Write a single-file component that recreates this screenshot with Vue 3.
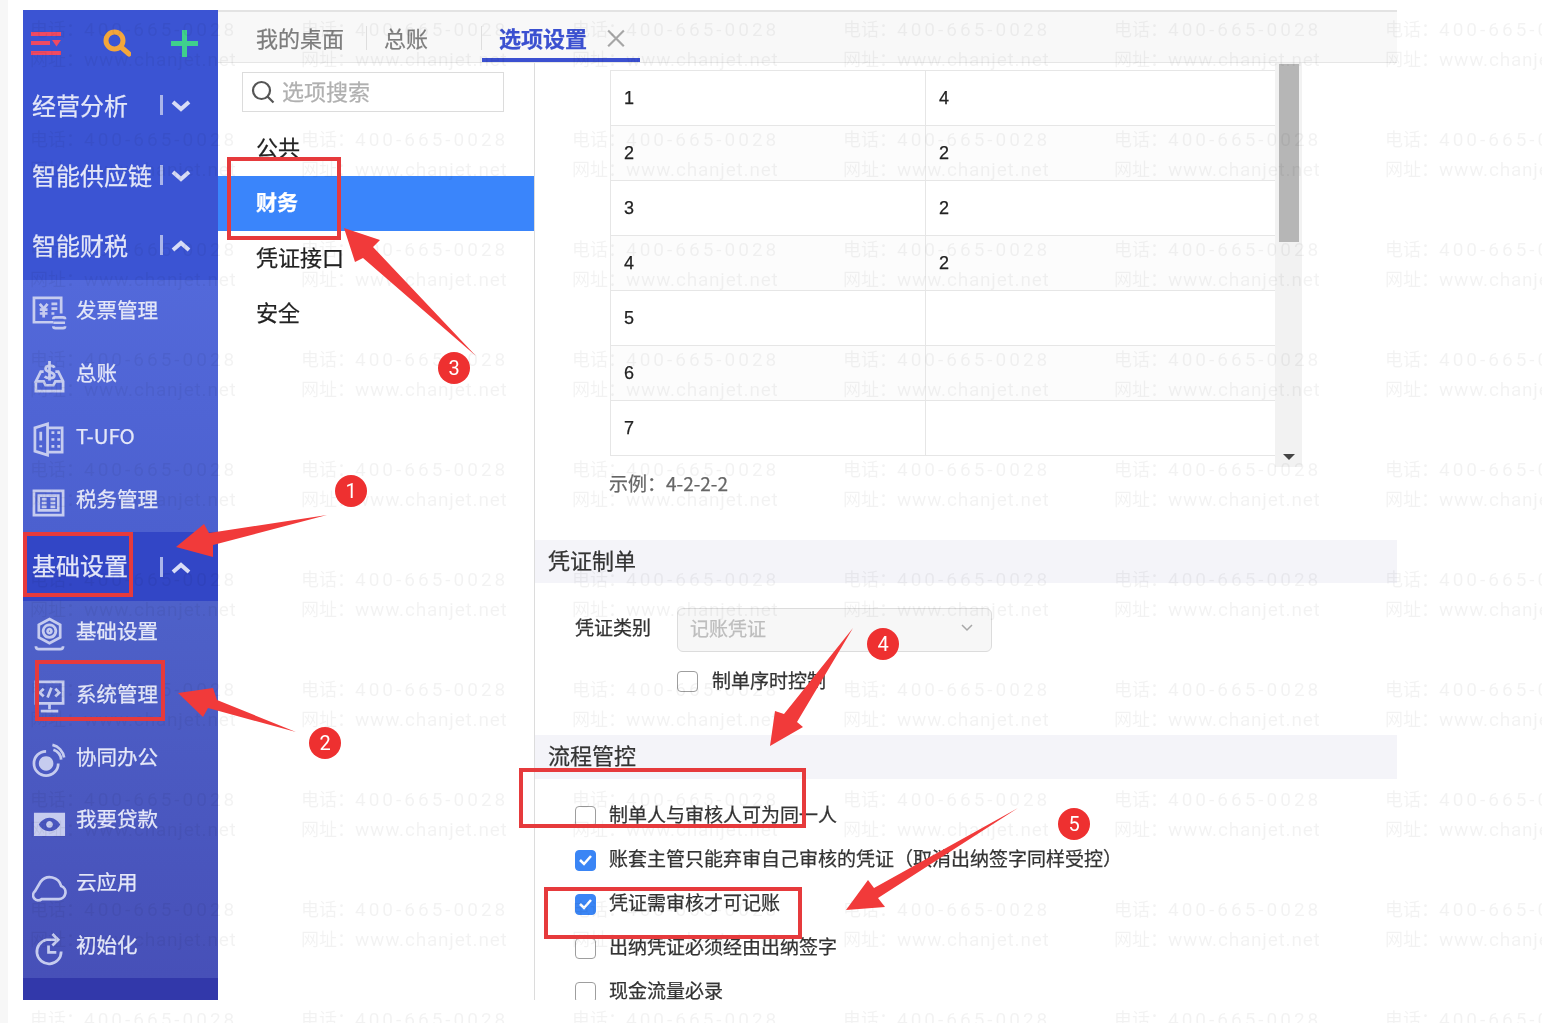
<script setup>
const icons = {
  invoice: ['M22 27H2V2h28v16', 'M8 8l4 5 4-5M12 13v9M8 14h8M8 18h8', 'M20 8h6M20 13h6M20 18h3', 'M22 24a2 2 0 0 1 2-2h8a2 2 0 0 1 2 2M22 31a2 2 0 0 0 2 2h8a2 2 0 0 0 2-2M22 27.5h12'],
  ledger: ['M4 23v10h28V23L27 13h-3M12 13H9L4 23h8l2 4h8l2-4h8', 'M23 9c-1-3-9-3-9 1s9 3 9 7-8 3-10 1M18 2v20'],
  ufo: ['M3 6l13-4v32L3 30z', 'M16 6h15v25H16', 'M9 10v9M9 24v2', 'M20 11h3M26 11h3M20 18h3M26 18h3M20 25h3M26 25h3'],
  tax: ['M2 6h30v25H2z', 'M7 11h20v15H7z', 'M19 14.500h5M19 18.500h5M19 22.500h5', 'M10 14.500h5M10 18.500h5M10 22.500h5'],
  base: ['M18 2l11 6v13l-11 6-11-6V8z', 'M18 8a6.500 6.500 0 1 0 .01 0', 'M18 12.500a2 2 0 1 0 .01 0', 'M4 30q0 3 3 3h22q3 0 3-3'],
  system: ['M4 2h28v22H4z', 'M12 9l-4 4 4 4M24 9l4 4-4 4M20 8l-4 10', 'M18 24v6M9 32h18'],
  collab: ['M27 21a12.500 12.500 0 1 1-12.500-12.500', 'M22 7a12 12 0 0 1 8 10', 'M21 2a16 16 0 0 1 12 13'],
  cloud: ['M10 32h17a7 7 0 0 0 3-13.500A12 12 0 0 0 9 14L3 24a5 5 0 0 0 7 8z'],
  init: ['M30 21a12.500 12.500 0 1 1-15-12h10', 'M21 3l6 6-6 6', 'M17 15v7h8']
};
const solid = {
  collab: 'M14.500 13.500a7.500 7.500 0 1 0 .01 0',
  loan: 'M2 8h32v24H2zM18 13c-6 0-10 5-11 7 1 2 5 7 11 7s10-5 11-7c-1-2-5-7-11-7zM18 16.500a3.500 3.500 0 1 1-.01 0z'
};
const financeItems = [
  { name: '发票管理', icon: 'invoice' },
  { name: '总账', icon: 'ledger' },
  { name: 'T-UFO', icon: 'ufo' },
  { name: '税务管理', icon: 'tax' }
];
const baseItems = [
  { name: '基础设置', icon: 'base' },
  { name: '系统管理', icon: 'system' },
  { name: '协同办公', icon: 'collab' },
  { name: '我要贷款', icon: 'loan' },
  { name: '云应用', icon: 'cloud' },
  { name: '初始化', icon: 'init' }
];
const tableRows = [['1', '4'], ['2', '2'], ['3', '2'], ['4', '2'], ['5', ''], ['6', ''], ['7', '']];
const checks = [
  { text: '制单人与审核人可为同一人', on: false },
  { text: '账套主管只能弃审自己审核的凭证（取消出纳签字同样受控）', on: true },
  { text: '凭证需审核才可记账', on: true },
  { text: '出纳凭证必须经由出纳签字', on: false },
  { text: '现金流量必录', on: false }
];
const marks = Array.from({ length: 60 }, (_, i) => i);
const frames = [
  [229, 159, 110, 79],
  [25, 534, 106, 61],
  [37, 662, 126, 57],
  [521, 770, 283, 56],
  [546, 889, 254, 48]
];
const arrows = [
  '176,547 204,524 209,533 327,515 213,545 213,557',
  '178,693 213,688 217,700 296,732 208,708 203,717',
  '344,228 380,240 373,247 476,356 363,258 355,262',
  '853,628 797,722 803,727 770,746 775,711 784,714',
  '1018,808 878,898 885,907 846,910 868,880 874,888'
];
const badges = [
  { n: 1, x: 351, y: 491 },
  { n: 2, x: 325, y: 743 },
  { n: 3, x: 454, y: 368 },
  { n: 4, x: 883, y: 644 },
  { n: 5, x: 1074, y: 824 }
];
</script>

<template>
  <div class="page">
    <div class="app">
      <aside class="side">
        <div class="tools">
          <svg class="tool-menu" viewBox="0 0 30 30"><path d="M0 4h30v4H0zM0 13h19v4H0zM0 23h30v4H0zM21 12h9l-4.500 6.500z" /></svg>
          <svg class="tool-search" viewBox="0 0 28 28"><circle cx="11.500" cy="11.500" r="8.500" /><path d="M18 18l8 7" /></svg>
          <svg class="tool-plus" viewBox="0 0 29 29"><path d="M14.500 1v27M1 14.500h27" /></svg>
        </div>
        <div class="head"><span class="head-name">经营分析</span><i class="head-sep"></i><svg class="chev" viewBox="0 0 20 12"><path d="M2 2l8 7 8-7" /></svg></div>
        <div class="head"><span class="head-name">智能供应链</span><i class="head-sep"></i><svg class="chev" viewBox="0 0 20 12"><path d="M2 2l8 7 8-7" /></svg></div>
        <div class="head"><span class="head-name">智能财税</span><i class="head-sep"></i><svg class="chev" viewBox="0 0 20 12"><path d="M2 10l8-7 8 7" /></svg></div>
        <div class="sub sub-finance">
          <div v-for="item in financeItems" :key="item.name" class="sub-item">
            <svg class="sub-icon" viewBox="0 0 36 36">
              <path v-if="solid[item.icon]" class="icon-solid" fill-rule="evenodd" :d="solid[item.icon]" />
              <path v-for="d in icons[item.icon]" :key="d" :d="d" />
            </svg>
            <span class="sub-name">{{ item.name }}</span>
          </div>
        </div>
        <div class="head head-active"><span class="head-name">基础设置</span><i class="head-sep"></i><svg class="chev" viewBox="0 0 20 12"><path d="M2 10l8-7 8 7" /></svg></div>
        <div class="sub sub-base">
          <div v-for="item in baseItems" :key="item.name" class="sub-item">
            <svg class="sub-icon" viewBox="0 0 36 36">
              <path v-if="solid[item.icon]" class="icon-solid" fill-rule="evenodd" :d="solid[item.icon]" />
              <path v-for="d in icons[item.icon]" :key="d" :d="d" />
            </svg>
            <span class="sub-name">{{ item.name }}</span>
          </div>
        </div>
        <div class="side-foot"></div>
      </aside>

      <main class="main">
        <nav class="tabs">
          <div class="tab tab-one">我的桌面</div>
          <div class="tab tab-two">总账</div>
          <div class="tab tab-three">选项设置<span class="tab-close">×</span></div>
        </nav>
        <div class="body">
          <section class="left">
            <div class="search">
              <svg class="search-icon" viewBox="0 0 24 24"><circle cx="10.500" cy="10.500" r="8.500" /><path d="M16.500 16.500l6 6" /></svg>
              <span class="search-text">选项搜索</span>
            </div>
            <div class="left-item">公共</div>
            <div class="left-item left-active">财务</div>
            <div class="left-item">凭证接口</div>
            <div class="left-item">安全</div>
          </section>
          <section class="right">
            <div class="table-wrap">
              <div class="table">
                <div v-for="(row, i) in tableRows" :key="row[0]" class="row" :class="{ 'row-even': i % 2 === 1 }">
                  <div class="cell cell-a">{{ row[0] }}</div>
                  <div class="cell">{{ row[1] }}</div>
                </div>
              </div>
              <div class="scroll">
                <div class="thumb"></div>
                <i class="scroll-arrow"></i>
              </div>
            </div>
            <div class="sample">示例：4-2-2-2</div>
            <div class="bar">凭证制单</div>
            <div class="select-row">
              <span class="select-label">凭证类别</span>
              <div class="select">
                <span class="select-text">记账凭证</span>
                <svg class="select-chev" viewBox="0 0 12 8"><path d="M1 1l5 5 5-5" /></svg>
              </div>
            </div>
            <div class="check-lone"><i class="box"></i><span class="check-text">制单序时控制</span></div>
            <div class="bar bar-second">流程管控</div>
            <div class="check-list">
              <div v-for="c in checks" :key="c.text" class="check">
                <i class="box" :class="{ 'box-on': c.on }">
                  <svg v-if="c.on" viewBox="0 0 21 21"><path d="M5 11l4 4 7-8" /></svg>
                </i>
                <span class="check-text">{{ c.text }}</span>
              </div>
            </div>
          </section>
        </div>
      </main>
    </div>

    <div class="marks">
      <div v-for="m in marks" :key="m" class="mark">
        <div>电话：<span class="mark-tel">400-665-0028</span></div>
        <div>网址：<span class="mark-url">www.chanjet.net</span></div>
      </div>
    </div>

    <svg class="notes" viewBox="0 0 1542 1023">
      <rect v-for="f in frames" :key="f[0]" :x="f[0]" :y="f[1]" :width="f[2]" :height="f[3]" />
      <polygon v-for="a in arrows" :key="a" :points="a" />
    </svg>
    <div v-for="b in badges" :key="b.n" class="badge" :style="{ left: b.x - 16 + 'px', top: b.y - 16 + 'px' }">{{ b.n }}</div>
  </div>
</template>

<style>
html, body { margin: 0; background: #fff; }
</style>

<style scoped>
.page {
  position: relative;
  box-sizing: border-box;
  width: 1542px;
  height: 1023px;
  padding: 10px 145px 23px 23px;
  overflow: hidden;
  background: linear-gradient(90deg, #f7f7f7 8px, #fff 8px);
  font-family: "Noto Sans CJK SC", "Liberation Sans", sans-serif;
  color: #333;
  filter: blur(0.55px);
  -webkit-text-stroke: 0.25px;
}
.app { display: flex; height: 990px; overflow: hidden; background: #fff; }

.side { display: flex; flex-direction: column; flex: 0 0 195px; background: #3b54d3; color: #e4e7f8; }
.tools { display: flex; align-items: center; height: 60px; padding: 6px 0 0 8px; box-sizing: border-box; }
.tool-menu { width: 30px; height: 30px; fill: #ef4a63; margin-right: 42px; }
.tool-search { width: 28px; height: 28px; fill: none; stroke: #f4a63b; stroke-width: 5; stroke-linecap: round; margin-right: 39px; }
.tool-plus { width: 29px; height: 29px; fill: none; stroke: #3fd08c; stroke-width: 5; }
.head { display: flex; align-items: center; flex: 0 0 70px; padding-left: 9px; font-size: 24px; }
.head-name { width: 128px; padding-bottom: 1px; white-space: nowrap; line-height: 30px; }
.head-sep { width: 2.500px; height: 20px; background: #aab5ea; }
.chev { width: 20px; height: 12px; margin: 2px 0 0 8px; fill: none; stroke: #d8dcf6; stroke-width: 4; }
.head-active { flex-basis: 69px; background: #3246c6; }
.head-active .head-name { padding-bottom: 4px; }
.sub { display: flex; flex-direction: column; }
.sub-finance { flex: 0 0 252px; background: linear-gradient(180deg, #5369da, #4c60cf); }
.sub-base { flex: 0 0 377px; background: linear-gradient(180deg, #4e61c9, #4750b8); }
.sub-item { display: flex; align-items: center; flex: 1; padding-left: 9px; font-size: 20.500px; white-space: nowrap; margin-top: -1px; padding-bottom: 1px; }
.sub-icon { width: 35px; height: 35px; margin: 6px 9px 0 0; fill: none; stroke: #c6ccef; stroke-width: 2.800; -webkit-text-stroke: 0; }
.sub-name { padding-bottom: 3px; }
.icon-solid { fill: #c6ccef; stroke: none; }
.side-foot { flex: 1; background: #3238aa; }

.main { display: flex; flex-direction: column; flex: 1; min-width: 0; }
.tabs {
  display: flex;
  box-sizing: border-box;
  flex: 0 0 52px;
  align-items: stretch;
  background: #f8f8f8;
  border-top: 2px solid #e3e3e3;
  border-bottom: 1px solid #e6e6e6;
  font-size: 22px;
  color: #7d7d7d;
}
.tab { display: flex; align-items: center; box-sizing: border-box; height: 50px; white-space: nowrap; }
.tab-one { width: 149px; padding-left: 38px; }
.tab-one, .tab-two { position: relative; }
.tab-two { width: 115px; padding-left: 17px; }
.tab-one::after, .tab-two::after { content: ""; position: absolute; right: 0; top: 14px; width: 1px; height: 24px; background: #dedede; }
.tab-three { width: 158px; padding: 4px 0 0 17px; color: #3b50d0; font-weight: 700; border-bottom: 4px solid #3b50d0; }
.tab-close { margin-left: 16px; font-size: 26px; line-height: 1; font-weight: 400; color: #a5a5a5; }

.body { display: flex; flex: 1; min-height: 0; }
.left { flex: 0 0 317px; box-sizing: border-box; border-right: 1px solid #dcdcdc; font-size: 22px; }
.search {
  display: flex;
  align-items: center;
  box-sizing: border-box;
  width: 262px;
  height: 40px;
  margin: 9px 0 9px 24px;
  padding-left: 8px;
  border: 1px solid #dcdcdc;
  color: #b0b0b0;
}
.search-icon { width: 24px; height: 24px; margin-right: 7px; fill: none; stroke: #555; stroke-width: 2.200; }
.search-text { padding-bottom: 5px; }
.left-item { display: flex; align-items: center; box-sizing: border-box; height: 55px; padding: 0 0 5px 38px; color: #222; }
.left-active { color: #fff; font-weight: 700; background: #3a85fb; font-size: 21px; }

.right { flex: 1; min-width: 0; overflow: hidden; }
.table-wrap { display: flex; height: 404px; margin-left: 75px; }
.table { flex: 0 0 665px; box-sizing: border-box; padding-top: 7px; }
.row { display: flex; box-sizing: border-box; height: 56px; margin-bottom: -1px; border: 1px solid #e6e6e6; border-right: 0; background: #fff; }
.row-even { background: #fcfcfc; }
.cell { display: flex; align-items: center; flex: 1; box-sizing: border-box; padding-left: 13px; font: 18px/1 "Liberation Sans", sans-serif; color: #222; }
.cell-a { flex: 0 0 315px; border-right: 1px solid #e6e6e6; }
.scroll { position: relative; flex: 0 0 27px; background: #f2f2f2; }
.thumb { width: 20px; height: 178px; margin: 1px 0 0 4px; background: #b6b6b6; }
.scroll-arrow { position: absolute; left: 8px; top: 391px; border: 6px solid transparent; border-top: 6px solid #444; border-bottom: 0; }
.sample { height: 73px; box-sizing: border-box; padding: 2px 0 0 74px; font-size: 19px; line-height: 28px; color: #666; }
.bar { display: flex; align-items: center; box-sizing: border-box; height: 43px; padding: 0 0 6px 13px; background: #f4f4f9; font-size: 22px; color: #333; }
.bar-second { height: 44px; margin-top: 43px; }
.select-row { display: flex; align-items: center; margin-top: 25px; height: 44px; padding-left: 40px; font-size: 19px; }
.select-label { width: 102px; padding-bottom: 7px; }
.select {
  display: flex;
  align-items: center;
  justify-content: space-between;
  box-sizing: border-box;
  width: 315px;
  height: 44px;
  padding: 0 18px 0 12px;
  background: #f7f7f7;
  border: 1.500px solid #dcdcdc;
  border-radius: 6px;
  color: #bdbdbd;
}
.select-text { padding-bottom: 6px; }
.select-chev { width: 12px; height: 8px; margin-bottom: 4px; fill: none; stroke: #a8a8a8; stroke-width: 1.500; }
.check-lone { display: flex; align-items: center; gap: 14px; height: 21px; margin: 19px 0 0 142px; font-size: 19px; }
.check-list { margin-top: 15px; padding-left: 40px; }
.check { display: flex; align-items: center; gap: 13px; height: 44px; font-size: 19px; white-space: nowrap; }
.check-text { padding-bottom: 5px; }
.box { display: block; box-sizing: border-box; flex: 0 0 21px; width: 21px; height: 21px; background: #fff; border: 1.500px solid #9e9e9e; border-radius: 4px; }
.box-on { background: #3a85f5; border-color: #3a85f5; }
.box svg { display: block; width: 21px; height: 21px; margin: -1.500px; fill: none; stroke: #fff; stroke-width: 2.500; }

.marks {
  position: absolute;
  left: 30px;
  top: 15px;
  display: grid;
  grid-template-columns: repeat(6, 271px);
  grid-auto-rows: 110px;
  font: 18px/30px Roboto, "Noto Sans CJK SC", sans-serif;
  color: rgba(0, 0, 0, 0.05);
  -webkit-text-stroke: 0;
  white-space: nowrap;
  pointer-events: none;
}
.mark-tel { letter-spacing: 3px; font-size: 19px; }
.mark-url { letter-spacing: 0.800px; font-size: 19px; }

.notes { position: absolute; left: 0; top: 0; width: 1542px; height: 1023px; pointer-events: none; }
.notes rect { fill: none; stroke: #e63a3c; stroke-width: 4; }
.notes polygon { fill: #f13a3a; }
.badge {
  position: absolute;
  width: 32px;
  height: 32px;
  border-radius: 50%;
  background: #ee3030;
  color: #fff;
  font: 20px/32px Roboto, sans-serif;
  text-align: center;
  -webkit-text-stroke: 0;
}
</style>
